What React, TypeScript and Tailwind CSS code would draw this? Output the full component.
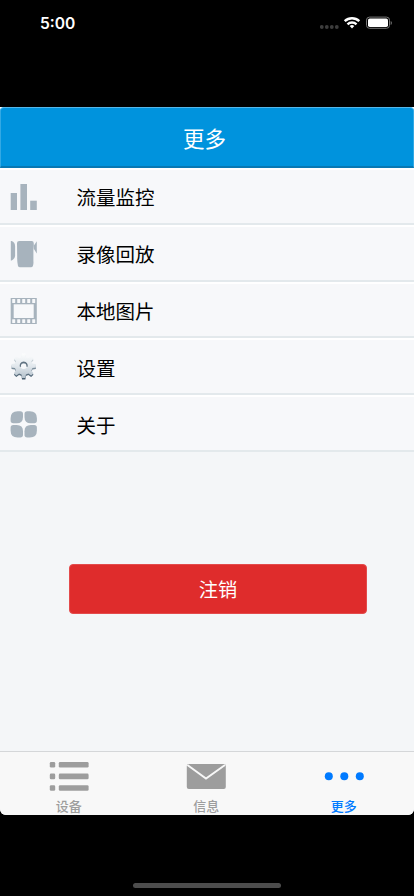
import type { ReactNode } from "react";

interface MenuItem {
  id: string;
  label: string;
  icon: ReactNode;
}

interface TabItem {
  id: string;
  label: string;
  icon: ReactNode;
}

function BarsIcon() {
  return (
    <svg width="28" height="28" viewBox="0 0 28 28" fill="#a7b3bd">
      <rect x="0.7" y="10" width="6.3" height="17" />
      <rect x="10.4" y="1" width="6.6" height="26" />
      <rect x="20.2" y="17.7" width="6.6" height="9.3" />
    </svg>
  );
}

function PlaybackIcon() {
  return (
    <svg width="28" height="28" viewBox="0 0 28 28" fill="#a7b3bd">
      <path d="M.8 1h.8q3.5 1 3.5 5.5v9q0 3-3.5 5H.8z" />
      <path d="M9.3 1h12.4q2 0 2 2 .3 3-.3 7v11q.3 3-.5 5-.5 1.3-2 1.3H10q-1.5 0-2-1.3-1-4.5-.8-9L7 3q0-2 2.3-2z" />
      <path d="M26.8 1.2v12.2l-2.9-4.3V5.6z" />
    </svg>
  );
}

function FilmIcon() {
  const holes = [2.2, 7.2, 12.2, 17.2, 22.2];
  return (
    <svg width="28" height="28" viewBox="0 0 28 28">
      <rect x="0.7" y="1" width="26.1" height="26" fill="#a7b3bd" />
      <rect x="3.7" y="7.3" width="20" height="13.7" fill="#f7f8fa" />
      {holes.map((x) => (
        <g key={x} fill="#f7f8fa">
          <rect x={x} y="2" width="3" height="4" rx="0.5" />
          <rect x={x} y="22.3" width="3" height="3.8" rx="0.5" />
        </g>
      ))}
    </svg>
  );
}

// Outline of an eight-toothed wheel, as one path so that the gradient runs over all of it
function gearPath(cx: number, cy: number, outer: number, inner: number) {
  const points: string[] = [];
  for (let i = 0; i < 8; i++) {
    const steps = [
      [-14, inner],
      [-8, outer],
      [8, outer],
      [14, inner],
    ];
    for (const [offset, radius] of steps) {
      const angle = ((i * 45 + offset) * Math.PI) / 180;
      points.push(`${(cx + radius * Math.sin(angle)).toFixed(2)} ${(cy - radius * Math.cos(angle)).toFixed(2)}`);
    }
  }
  return `M${points.join("L")}Z`;
}

function GearIcon() {
  const hole = "M10.3 12.6a3.4 3.4 0 1 0 6.8 0a3.4 3.4 0 1 0-6.8 0z";
  const shape = gearPath(13.7, 12.8, 12.3, 9) + hole;
  return (
    <svg width="28" height="28" viewBox="0 0 28 28">
      <defs>
        <linearGradient id="gear-face" x1="0" y1="0" x2="0" y2="1">
          <stop offset="0" stopColor="#fcfdfd" />
          <stop offset="0.5" stopColor="#e2e8ed" />
          <stop offset="1" stopColor="#b4c1cb" />
        </linearGradient>
        <linearGradient id="gear-edge" x1="0" y1="0" x2="0" y2="1">
          <stop offset="0" stopColor="#e8edf0" />
          <stop offset="0.35" stopColor="#a9b6c0" />
          <stop offset="0.6" stopColor="#708392" />
          <stop offset="1" stopColor="#43596a" />
        </linearGradient>
      </defs>
      <path d={shape} transform="translate(0 1.5)" fill="url(#gear-edge)" fillRule="evenodd" />
      <path d={shape} fill="url(#gear-face)" fillRule="evenodd" />
      <path d="M10.5 13.8a3.4 3.4 0 1 1 6.4 0" fill="none" stroke="#607280" strokeWidth="1.3" />
    </svg>
  );
}

function PetalsIcon() {
  return (
    <svg width="28" height="28" viewBox="0 0 28 28" fill="#a7b3bd">
      <path d="M7.6 1.2h2.7q2.7 0 2.7 2.7v3q0 6.3-6.3 6.3H3.3Q.6 13.2.6 10.5V8.2q0-7 7-7z" />
      <path d="M19.9 1.2h-2.7q-2.7 0-2.7 2.7v3q0 6.3 6.3 6.3h3.4q2.7 0 2.7-2.7V8.2q0-7-7-7z" />
      <path d="M7.6 27.4h2.700q2.700 0 2.700-2.700v-3.400q0-6.300-6.300-6.300H3.300Q.6 15 .6 17.700v2.700q0 7 7 7z" />
      <path d="M19.900 27.400h-2.700q-2.700 0-2.700-2.700v-3.400q0-6.300 6.300-6.300h3.400q2.700 0 2.700 2.700v2.700q0 7-7 7z" />
    </svg>
  );
}

const menuItems: MenuItem[] = [
  { id: "traffic", label: "流量监控", icon: <BarsIcon /> },
  { id: "playback", label: "录像回放", icon: <PlaybackIcon /> },
  { id: "photos", label: "本地图片", icon: <FilmIcon /> },
  { id: "settings", label: "设置", icon: <GearIcon /> },
  { id: "about", label: "关于", icon: <PetalsIcon /> },
];

const tabs: TabItem[] = [
  {
    id: "devices",
    label: "设备",
    icon: (
      <svg width="40" height="30" viewBox="0 0 40 30" fill="currentColor">
        {[1, 12.6, 24.2].map((y) => (
          <g key={y}>
            <rect x="0.8" y={y} width="5.4" height="5.6" rx="1.3" />
            <rect x="9.8" y={y} width="29.8" height="5.6" rx="1.3" />
          </g>
        ))}
      </svg>
    ),
  },
  {
    id: "messages",
    label: "信息",
    icon: (
      <svg width="40" height="30" viewBox="0 0 40 30">
        <rect x="0.8" y="3" width="39" height="25" rx="2" fill="currentColor" />
        <path d="M1.4 4L20 17.5 39 4" fill="none" stroke="#f8f8f8" strokeWidth="1.9" />
      </svg>
    ),
  },
  {
    id: "more",
    label: "更多",
    icon: (
      <svg width="40" height="30" viewBox="0 0 40 30" fill="currentColor">
        <circle cx="4.8" cy="15.3" r="4" />
        <circle cx="20.3" cy="15.3" r="4" />
        <circle cx="35.8" cy="15.3" r="4" />
      </svg>
    ),
  },
];

function StatusBar() {
  return (
    <div className="h-[107px] shrink-0 flex items-start justify-between pl-10 pr-[22px] pt-[13px]">
      <span className="pt-px text-[15.6px] leading-5 font-semibold text-white font-['Inter','Liberation_Sans',sans-serif]">
        5:00
      </span>
      <div className="flex items-center h-5">
        <svg width="72" height="20" viewBox="0 0 72 20">
          <g fill="#3d3d3d">
            <circle cx="1.8" cy="14" r="1.9" />
            <circle cx="6.8" cy="14" r="1.9" />
            <circle cx="11.8" cy="14" r="1.9" />
            <circle cx="16.8" cy="14" r="1.9" />
          </g>
          {/* Wi-Fi */}
          <g fill="none" stroke="#fff" strokeWidth="2.4">
            <path d="M24.7 8.2a10.6 10.6 0 0 1 14.6 0" />
            <path d="M27.5 11.3a6.5 6.5 0 0 1 9 0" />
          </g>
          <path d="M32 15.5l-2.3-2.4a3.4 3.4 0 0 1 4.6 0z" fill="#fff" />
          {/* Battery */}
          <rect x="46.5" y="4.1" width="23" height="11.2" rx="3" fill="none" stroke="#777" />
          <rect x="48" y="5.4" width="20" height="8.6" rx="1.8" fill="#fff" />
          <path d="M70.7 8v4q1.2-.5 1.2-2t-1.2-2z" fill="#777" />
        </svg>
      </div>
    </div>
  );
}

export default function App() {
  const activeTab = "more";

  return (
    <div className="w-[414px] h-[896px] flex flex-col bg-black overflow-hidden font-['Noto_Sans_CJK_SC',sans-serif]">
      <StatusBar />

      <div className="h-[708px] shrink-0 flex flex-col bg-[#f4f6f8] rounded-b-[6px] overflow-hidden">
        <header className="h-[61px] shrink-0 bg-white">
          <h1 className="h-full flex items-center justify-center pt-px pr-[5px] rounded-t-[4px] bg-[#0093dd] border-x border-t border-b-2 border-x-[#33a9e4] border-t-[#55b7e9] border-b-[#0878b3] text-white text-[21.5px] leading-none font-normal">
            更多
          </h1>
        </header>

        <ul className="shrink-0">
          {menuItems.map((item) => (
            <li
              key={item.id}
              className="h-[56.8px] flex items-center pl-[10px] pt-[1.4px] bg-[#f7f8fa] border-t-2 border-b-2 border-t-white border-b-[#e3e9ec]"
            >
              <span className="w-[66.6px] shrink-0">{item.icon}</span>
              <span className="text-[19.5px] leading-none text-black">{item.label}</span>
            </li>
          ))}
        </ul>

        <button className="mt-[112px] ml-[69px] w-[298px] h-[50px] pt-[2px] shrink-0 rounded-[4px] bg-[#df2c2c] border border-[#e34b4c] text-white text-[19.2px] leading-none font-normal">
          注销
        </button>

        <nav className="mt-auto h-[64px] shrink-0 grid grid-cols-[137.5px_137.5px_137.5px] bg-[#f8f8f8] border-t border-[#d5d7d9]">
          {tabs.map((tab) => (
            <button
              key={tab.id}
              className={`flex flex-col items-center pt-[9px] ${
                tab.id === activeTab ? "text-[#007aff]" : "text-[#9d9d9d]"
              }`}
            >
              {tab.icon}
              <span className="mt-[8px] text-[13px] leading-none font-medium">{tab.label}</span>
            </button>
          ))}
        </nav>
      </div>

      <div className="flex-1 flex items-end justify-center pb-[8px]">
        <div className="w-[148px] h-[5px] rounded-full bg-[#4c4c4c]" />
      </div>
    </div>
  );
}
